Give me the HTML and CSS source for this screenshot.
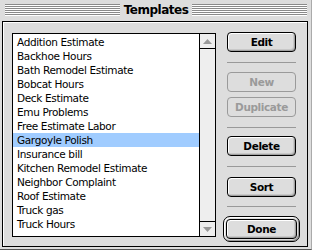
FILE: index.html
```html
<!DOCTYPE html>
<html>
<head>
<meta charset="utf-8">
<link rel="stylesheet" href="styles.css">
</head>
<body>
<div class="window">
  <div class="titlebar">
    <div class="stripes"></div>
    <div class="title">Templates</div>
    <div class="stripes"></div>
  </div>
  <div class="content">
    <div class="listbox">
      <ul class="list">
        <li>Addition Estimate</li>
        <li>Backhoe Hours</li>
        <li>Bath Remodel Estimate</li>
        <li>Bobcat Hours</li>
        <li>Deck Estimate</li>
        <li>Emu Problems</li>
        <li>Free Estimate Labor</li>
        <li class="selected">Gargoyle Polish</li>
        <li>Insurance bill</li>
        <li>Kitchen Remodel Estimate</li>
        <li>Neighbor Complaint</li>
        <li>Roof Estimate</li>
        <li>Truck gas</li>
        <li>Truck Hours</li>
      </ul>
      <div class="scrollbar">
        <div class="arrow up"><svg width="9" height="5" viewBox="0 0 9 5"><polygon points="0,5 9,5 4.5,0" fill="#999"/></svg></div>
        <div class="track"></div>
        <div class="arrow down"><svg width="9" height="5" viewBox="0 0 9 5"><polygon points="0,0 9,0 4.5,5" fill="#999"/></svg></div>
      </div>
    </div>
    <div class="buttons">
      <div class="btn b-edit">Edit</div>
      <div class="sep s1"></div>
      <div class="btn disabled b-new">New</div>
      <div class="btn disabled b-dup">Duplicate</div>
      <div class="sep s2"></div>
      <div class="btn b-del">Delete</div>
      <div class="sep s3"></div>
      <div class="btn b-sort">Sort</div>
      <div class="sep s4"></div>
      <div class="ring"><div class="btn">Done</div></div>
    </div>
  </div>
</div>
</body>
</html>
```

FILE: styles.css
```css
html, body {
  margin: 0;
  padding: 0;
  background: #dddddd;
}
.window {
  width: 312px;
  height: 250px;
  box-sizing: border-box;
  background: #dddddd;
  border-right: 1px solid #aaaaaa;
  border-bottom: 1px solid #555555;
  font-family: "DejaVu Sans", sans-serif;
}
.titlebar {
  height: 21px;
  display: flex;
  align-items: flex-start;
  padding: 0 4px 0 5px;
  box-sizing: border-box;
}
.stripes {
  flex: 1;
  height: 12px;
  margin-top: 4px;
  background: repeating-linear-gradient(to bottom, #8a8a8a 0 1px, #ffffff 1px 2px);
}
.title {
  padding: 0 4px;
  font-weight: bold;
  font-size: 12px;
  letter-spacing: -0.5px;
  line-height: 21px;
  color: #000;
}
.content {
  margin: 0 3px 0 2px;
  height: 226px;
  box-sizing: border-box;
  border: 1px solid #000;
  background: #dddddd;
  box-shadow: inset 1px 1px 0 #ffffff;
  padding: 10px 0 0 9px;
  display: flex;
  align-items: flex-start;
}
.listbox {
  margin-top: 1px;
  width: 204px;
  height: 204px;
  box-sizing: border-box;
  border: 1px solid #000;
  background: #fff;
  display: flex;
}
.list {
  list-style: none;
  margin: 0;
  padding: 1px 0 0 0;
  width: 187px;
  font-size: 10.5px;
  letter-spacing: -0.35px;
  color: #000;
}
.list li {
  height: 14px;
  line-height: 14px;
  padding-left: 4px;
  white-space: nowrap;
  overflow: hidden;
}
.list li.selected {
  background: #a0ccff;
}
.scrollbar {
  width: 15px;
  border-left: 1px solid #000;
  background: #eeeeee;
  display: flex;
  flex-direction: column;
}
.arrow {
  height: 14px;
  display: flex;
  align-items: center;
  justify-content: center;
  background: #eeeeee;
}
.arrow.up { border-bottom: 1px solid #000; }
.arrow.down { border-top: 1px solid #000; }
.track {
  flex: 1;
  background: #eeeeee;
}
.buttons {
  margin-left: 11px;
  width: 69px;
  display: flex;
  flex-direction: column;
}
.btn {
  height: 20px;
  box-sizing: border-box;
  border: 1px solid #000;
  border-radius: 4px;
  background: #dddddd;
  box-shadow: inset 1px 1px 0 #ffffff, inset -1px -1px 0 #a0a0a0, inset -2px -2px 0 #c8c8c8;
  font-weight: bold;
  font-size: 10.5px;
  letter-spacing: -0.4px;
  line-height: 18px;
  text-align: center;
  color: #000;
}
.btn.disabled {
  border-color: #9a9a9a;
  color: #9a9a9a;
  box-shadow: none;
}
.sep {
  height: 1px;
  background: #999999;
}
.s1 { margin-top: 10px; }
.b-new { margin-top: 9px; }
.b-dup { margin-top: 5px; }
.s2 { margin-top: 10px; }
.b-del { margin-top: 8px; }
.s3 { margin-top: 10px; }
.b-sort { margin-top: 10px; }
.s4 { margin-top: 9px; }
.ring {
  margin: 9px -4px 0 -4px;
  padding: 2px;
  border: 1px solid #000;
  border-radius: 7px;
  background: #dddddd;
  box-shadow: inset 1px 1px 0 #ffffff, inset -1px -1px 0 #999999;
}
```
